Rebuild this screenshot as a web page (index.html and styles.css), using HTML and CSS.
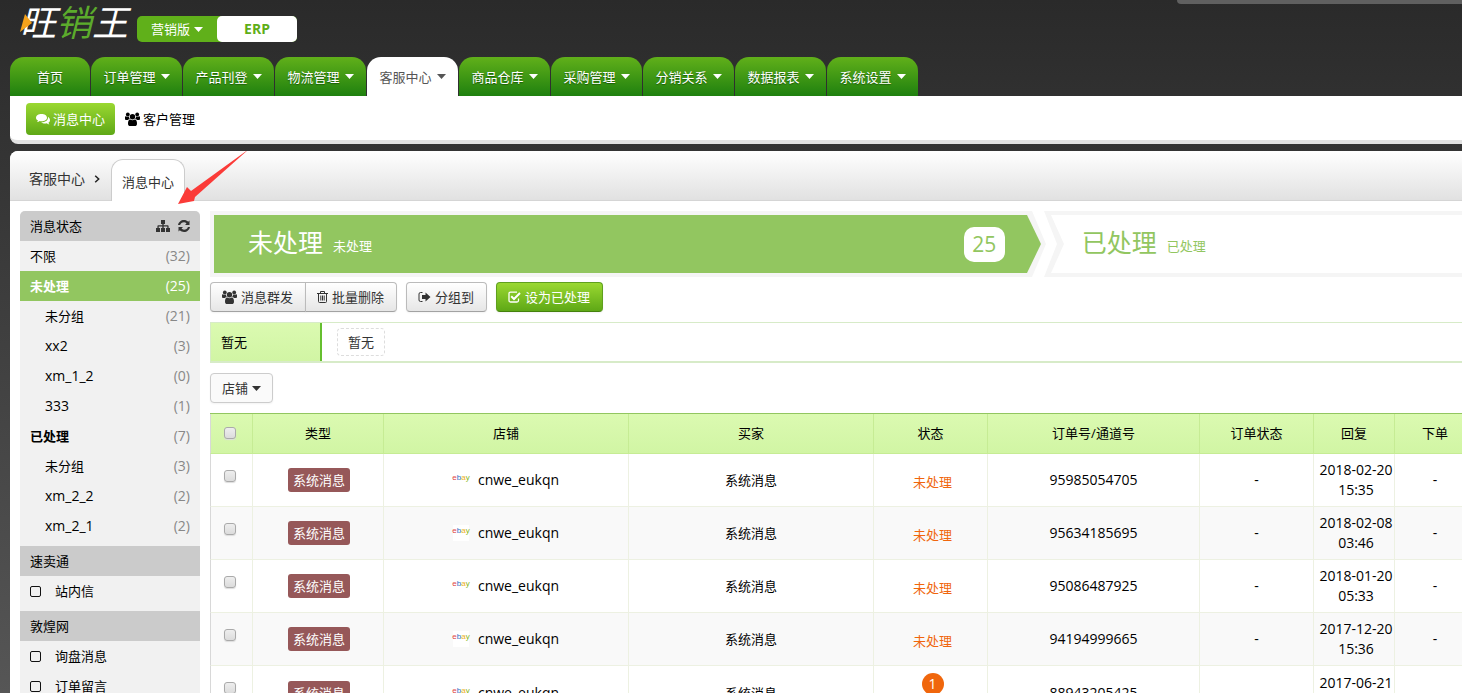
FILE: index.html
```html
<!DOCTYPE html>
<html lang="zh-CN">
<head>
<meta charset="utf-8">
<title>旺销王 - 消息中心</title>
<link rel="stylesheet" href="styles.css">
</head>
<body>
<svg class="sprite" aria-hidden="true">
  <symbol id="i-comments" viewBox="0 0 14 12">
    <path d="M5.500 1C2.500 1 0 2.500 0 4.700c0 1.300.8 2.200 2 2.900-.2.600-.6 1.100-1 1.500 1.100-.1 2-.4 2.700-1 .6.200 1.200.2 1.800.2 3 0 5.500-1.500 5.500-3.600S8.500 1 5.500 1z"/>
    <path d="M11.900 3.800c.1.300.1.600.1.900 0 2.700-3 4.600-6.500 4.600h-.4c1 .8 2.400 1.200 3.900 1.200.6 0 1.200-.1 1.700-.2.700.5 1.600 1 2.700 1.100-.5-.5-.8-1-1-1.600 1-.6 1.600-1.400 1.600-2.500 0-1.400-.8-2.700-2.100-3.500z"/>
  </symbol>
  <symbol id="i-users" viewBox="0 0 15 14">
    <circle cx="2.800" cy="2.500" r="1.900"/><circle cx="12.200" cy="2.500" r="1.900"/>
    <path d="M0 5.200C0 4.500.5 4 1 4.200c1 .7 2 .7 3 .3C3.900 5.700 4.300 6.500 5 7c-.9 0-1.600.3-2.100 1H1.500C.6 8 0 7.600 0 7zM15 5.200c0-.7-.5-1.200-1-1-1 .7-2 .7-3 .3.100 1.200-.3 2-1 2.500.9 0 1.600.3 2.100 1h1.400c.9 0 1.500-.4 1.500-1z"/>
    <circle cx="7.500" cy="4.700" r="2.700"/>
    <path d="M3 11.700c0-2.200.6-4.200 2.300-4.200 1.400 1 3 1 4.400 0 1.700 0 2.300 2 2.300 4.200 0 1.400-.9 2.300-2.200 2.300H5.200C3.900 14 3 13.100 3 11.700z"/>
  </symbol>
  <symbol id="i-sitemap" viewBox="0 0 14 12">
    <path d="M5 0h4v4H7.700v1.300h4c.6 0 .9.400.9.900V8H14v4h-4V8h1.300V6.500H7.700V8H9v4H5V8h1.300V6.500H2.700V8H4v4H0V8h1.400V6.200c0-.5.3-.9.9-.9h4V4H5z"/>
  </symbol>
  <symbol id="i-refresh" viewBox="0 0 12 12">
    <path d="M0 5C.5 2.100 3 0 6 0c1.600 0 3.100.6 4.200 1.700L11.500.5V5H7l1.500-1.600A4 4 0 0 0 6 2.200C4 2.200 2.600 3.300 2.100 5z"/>
    <path d="M12 7c-.5 2.900-3 5-6 5-1.600 0-3.100-.6-4.200-1.700L.5 11.500V7H5L3.500 8.600A4 4 0 0 0 6 9.800C8 9.800 9.400 8.700 9.900 7z"/>
  </symbol>
  <symbol id="i-trash" viewBox="0 0 11 12">
    <path fill="none" stroke="currentColor" d="M0 2.500h11M3.500 2V.5h4V2M1.500 3v7.500q0 1 1 1h6q1 0 1-1V3M3.800 4.500v5M5.500 4.500v5M7.200 4.500v5"/>
  </symbol>
  <symbol id="i-out" viewBox="0 0 13 12">
    <path fill="none" stroke="currentColor" d="M4.500 1.500H2.500Q1 1.500 1 3v6q0 1.500 1.500 1.500h2"/>
    <path d="M4 4h3.500V1.500L12.500 6 7.500 10.500V8H4z"/>
  </symbol>
  <symbol id="i-check" viewBox="0 0 13 12">
    <path fill="none" stroke="currentColor" stroke-width="1.300" d="M9 1.200H2.500q-1.500 0-1.500 1.500V9.500Q1 11 2.500 11H9q1.500 0 1.500-1.500V7.500"/>
    <path fill="none" stroke="currentColor" stroke-width="2" d="M3.200 5.200L6 8 12 2"/>
  </symbol>
  <symbol id="i-caret" viewBox="0 0 9 5"><path d="M0 0h9L4.500 5z"/></symbol>
</svg>

<header class="top">
  <h1 class="logo"><svg class="logo-mark" viewBox="0 0 12 18"><path d="M5 0l7 9-12 9z"/></svg>旺<span class="logo-green">销</span>王</h1>
  <div class="edition">
    <button class="edition-item" type="button">营销版<svg class="caret"><use href="#i-caret"/></svg></button>
    <button class="edition-item edition-on" type="button">ERP</button>
  </div>
  <div class="top-strip"></div>
</header>

<nav class="nav">
  <a class="tab tab-home" href="#">首页</a>
  <a class="tab" href="#">订单管理<svg class="caret"><use href="#i-caret"/></svg></a>
  <a class="tab" href="#">产品刊登<svg class="caret"><use href="#i-caret"/></svg></a>
  <a class="tab" href="#">物流管理<svg class="caret"><use href="#i-caret"/></svg></a>
  <a class="tab tab-on" href="#">客服中心<svg class="caret"><use href="#i-caret"/></svg></a>
  <a class="tab" href="#">商品仓库<svg class="caret"><use href="#i-caret"/></svg></a>
  <a class="tab" href="#">采购管理<svg class="caret"><use href="#i-caret"/></svg></a>
  <a class="tab" href="#">分销关系<svg class="caret"><use href="#i-caret"/></svg></a>
  <a class="tab" href="#">数据报表<svg class="caret"><use href="#i-caret"/></svg></a>
  <a class="tab" href="#">系统设置<svg class="caret"><use href="#i-caret"/></svg></a>
</nav>
<div class="subnav">
  <a class="sub sub-on" href="#"><svg class="ic-14"><use href="#i-comments"/></svg>消息中心</a>
  <a class="sub" href="#"><svg class="ic-15"><use href="#i-users"/></svg>客户管理</a>
</div>

<div class="panel">
  <div class="crumbs">
    <a class="crumb" href="#">客服中心</a>
    <svg class="chev" viewBox="0 0 6 8"><path d="M1.200.700L4.700 4 1.200 7.300"/></svg>
    <a class="crumb-tab" href="#">消息中心</a>
    <svg class="pointer" viewBox="0 0 72 56"><path d="M0 55L9 38l4 4L71 0 17 48l-1 4z"/></svg>
  </div>
  <div class="body">
    <aside class="side">
      <div class="side-head side-first">消息状态
        <span class="side-tools">
          <button class="tool" type="button" aria-label="分组"><svg class="ic-14"><use href="#i-sitemap"/></svg></button>
          <button class="tool" type="button" aria-label="刷新"><svg class="ic-12"><use href="#i-refresh"/></svg></button>
        </span>
      </div>
      <ul class="side-list">
        <li><a class="item" href="#">不限<span class="count">(32)</span></a></li>
        <li><a class="item item-on" href="#"><b>未处理</b><span class="count">(25)</span></a></li>
        <li><a class="item item-sub" href="#">未分组<span class="count">(21)</span></a></li>
        <li><a class="item item-sub" href="#"><span class="latin">xx2</span><span class="count">(3)</span></a></li>
        <li><a class="item item-sub" href="#"><span class="latin">xm_1_2</span><span class="count">(0)</span></a></li>
        <li><a class="item item-sub" href="#"><span class="latin">333</span><span class="count">(1)</span></a></li>
        <li><a class="item" href="#"><b>已处理</b><span class="count">(7)</span></a></li>
        <li><a class="item item-sub" href="#">未分组<span class="count">(3)</span></a></li>
        <li><a class="item item-sub" href="#"><span class="latin">xm_2_2</span><span class="count">(2)</span></a></li>
        <li><a class="item item-sub" href="#"><span class="latin">xm_2_1</span><span class="count">(2)</span></a></li>
      </ul>
      <div class="side-head">速卖通</div>
      <div class="side-list"><label class="pick"><input class="pick-box" type="checkbox">站内信</label></div>
      <div class="side-head">敦煌网</div>
      <div class="side-list">
        <label class="pick"><input class="pick-box" type="checkbox">询盘消息</label>
        <label class="pick"><input class="pick-box" type="checkbox">订单留言</label>
      </div>
    </aside>

    <main class="main">
      <div class="steps">
        <a class="step step-on" href="#">
          <span class="step-body"><span class="step-title">未处理</span><span class="step-note">未处理</span><span class="step-count">25</span></span>
          <svg class="step-end" viewBox="0 0 20 66"><path class="rim" d="M0 0h5l14 33L5 66H0z"/><path class="fill" d="M0 4l14 29L0 62z"/></svg>
        </a>
        <a class="step step-next" href="#">
          <svg class="step-end" viewBox="0 0 20 66"><path class="rim" d="M0 0h20v4H7l13 29L7 62h13v4H0l13-33z"/></svg>
          <span class="step-body"><span class="step-title">已处理</span><span class="step-note">已处理</span></span>
        </a>
      </div>

      <div class="actions">
        <div class="group">
          <button class="btn" type="button"><svg class="ic-15"><use href="#i-users"/></svg>消息群发</button>
          <button class="btn" type="button"><svg class="ic-11"><use href="#i-trash"/></svg>批量删除</button>
        </div>
        <button class="btn" type="button"><svg class="ic-13"><use href="#i-out"/></svg>分组到</button>
        <button class="btn btn-green" type="button"><svg class="ic-13"><use href="#i-check"/></svg>设为已处理</button>
      </div>

      <div class="filter">
        <div class="filter-name">暂无</div>
        <div class="filter-values"><span class="chip">暂无</span></div>
      </div>

      <button class="btn btn-flat" type="button">店铺<svg class="caret"><use href="#i-caret"/></svg></button>

      <div class="grid-wrap">
        <table class="grid">
          <colgroup><col class="w-check"><col class="w-type"><col><col><col class="w-state"><col class="w-order"><col class="w-state"><col class="w-date"><col class="w-date"></colgroup>
          <thead>
            <tr><th class="h-check"><input class="box" type="checkbox" aria-label="全选"></th><th>类型</th><th>店铺</th><th>买家</th><th>状态</th><th>订单号/通道号</th><th>订单状态</th><th>回复</th><th>下单</th></tr>
          </thead>
          <tbody>
            <tr><td class="c-check"><input class="box" type="checkbox" aria-label="选择 95985054705"></td><td><span class="tag">系统消息</span></td><td><span class="shop"><span class="ebay"><i class="e1">e</i><i class="e2">b</i><i class="e3">a</i><i class="e4">y</i></span>cnwe_eukqn</span></td><td>系统消息</td><td class="c-state">未处理</td><td class="latin">95985054705</td><td class="latin">-</td><td class="c-date">2018-02-20<br>15:35</td><td class="latin">-</td></tr>
            <tr><td class="c-check"><input class="box" type="checkbox" aria-label="选择 95634185695"></td><td><span class="tag">系统消息</span></td><td><span class="shop"><span class="ebay"><i class="e1">e</i><i class="e2">b</i><i class="e3">a</i><i class="e4">y</i></span>cnwe_eukqn</span></td><td>系统消息</td><td class="c-state">未处理</td><td class="latin">95634185695</td><td class="latin">-</td><td class="c-date">2018-02-08<br>03:46</td><td class="latin">-</td></tr>
            <tr><td class="c-check"><input class="box" type="checkbox" aria-label="选择 95086487925"></td><td><span class="tag">系统消息</span></td><td><span class="shop"><span class="ebay"><i class="e1">e</i><i class="e2">b</i><i class="e3">a</i><i class="e4">y</i></span>cnwe_eukqn</span></td><td>系统消息</td><td class="c-state">未处理</td><td class="latin">95086487925</td><td class="latin">-</td><td class="c-date">2018-01-20<br>05:33</td><td class="latin">-</td></tr>
            <tr><td class="c-check"><input class="box" type="checkbox" aria-label="选择 94194999665"></td><td><span class="tag">系统消息</span></td><td><span class="shop"><span class="ebay"><i class="e1">e</i><i class="e2">b</i><i class="e3">a</i><i class="e4">y</i></span>cnwe_eukqn</span></td><td>系统消息</td><td class="c-state">未处理</td><td class="latin">94194999665</td><td class="latin">-</td><td class="c-date">2017-12-20<br>15:36</td><td class="latin">-</td></tr>
            <tr><td class="c-check"><input class="box" type="checkbox" aria-label="选择 88943205425"></td><td><span class="tag">系统消息</span></td><td><span class="shop"><span class="ebay"><i class="e1">e</i><i class="e2">b</i><i class="e3">a</i><i class="e4">y</i></span>cnwe_eukqn</span></td><td>系统消息</td><td class="c-state"><span class="num">1</span>未处理</td><td class="latin">88943205425</td><td class="latin">-</td><td class="c-date">2017-06-21<br>10:20</td><td class="latin">-</td></tr>
          </tbody>
        </table>
      </div>
    </main>
  </div>
</div>
</body>
</html>
```
FILE: styles.css
```css
* { box-sizing: border-box; }
body {
  margin: 0;
  height: 100vh;
  overflow: hidden;
  display: flex;
  flex-direction: column;
  background: linear-gradient(#2a2a2a, #333 20%, #565656);
  font: 13px/20px "Open Sans", "Noto Sans CJK SC", sans-serif;
  color: #000;
}
a { color: inherit; text-decoration: none; }
button { font: inherit; color: inherit; margin: 0; cursor: pointer; }
svg { display: block; flex: none; fill: currentColor; }
.sprite { position: absolute; width: 0; height: 0; }
.caret { width: 9px; height: 5px; }
.ic-11 { width: 11px; height: 12px; }
.ic-12 { width: 12px; height: 12px; }
.ic-13 { width: 13px; height: 12px; }
.ic-14 { width: 14px; height: 12px; }
.ic-15 { width: 15px; height: 14px; }
.latin { font-size: 14px; }

/* header */
.top { display: flex; flex: none; height: 57px; padding-left: 20px; gap: 8px; position: relative; }
.logo {
  position: relative;
  margin: 0;
  width: 109px;
  font: italic 400 36px/40px "Noto Sans CJK SC", sans-serif;
  color: #fff;
  white-space: nowrap;
}
.logo-green { color: #5cab2c; }
.logo-mark { position: absolute; left: 0; top: 14px; width: 12px; height: 18px; fill: #f5a21b; }
.edition { display: flex; height: 26px; margin-top: 16px; border-radius: 5px; background: #60b01a; }
.edition-item {
  display: flex;
  align-items: center;
  justify-content: center;
  gap: 4px;
  width: 80px;
  padding: 0;
  border: 0;
  border-radius: 5px;
  background: none;
  color: #fff;
}
.edition-on { background: #fff; color: #5fae18; font-size: 14px; font-weight: 700; }
.top-strip {
  position: absolute;
  top: 0;
  right: 0;
  width: 285px;
  height: 4px;
  background: #606060;
  border-radius: 0 0 0 4px;
}

/* main navigation */
.nav { display: flex; flex: none; gap: 1px; padding-left: 10px; }
.tab {
  display: flex;
  align-items: center;
  justify-content: center;
  gap: 5px;
  width: 91px;
  height: 39px;
  border-radius: 14px 14px 0 0;
  background: linear-gradient(#61b01a, #1f800f);
  color: #fff;
  text-shadow: 0 1px 1px #1c5c08;
}
.tab-home { width: 80px; }
.tab-on { background: #fff; color: #555; text-shadow: none; }
.subnav {
  display: flex;
  flex: none;
  align-items: center;
  margin-left: 10px;
  height: 48px;
  padding: 2px 16px 0;
  background: #fff;
  border-bottom: 4px solid #e2e2e2;
  border-radius: 0 0 0 8px;
}
.sub { display: flex; align-items: center; gap: 3px; height: 32px; padding: 0 10px; border-radius: 4px; }
.sub-on { background: linear-gradient(#9ad831, #5ea816); color: #fff; }

/* content panel */
.panel { flex: 1; min-height: 0; margin: 7px 0 0 10px; background: #fff; border-radius: 8px 0 0 0; overflow: hidden; }
.crumbs {
  position: relative;
  display: flex;
  align-items: flex-end;
  height: 50px;
  padding-left: 19px;
  background: linear-gradient(#fff, #e1e1e1);
  border-bottom: 1px solid #d5d5d5;
}
.crumb { font-size: 14px; line-height: 42px; color: #333; }
.chev { width: 6px; height: 8px; margin: 0 11px 17px 9px; fill: none; stroke: #222; stroke-width: 1.5; }
.crumb-tab {
  width: 74px;
  height: 42px;
  margin-bottom: -1px;
  border: 1px solid #ccc;
  border-bottom: 0;
  border-radius: 12px 12px 0 0;
  background: #fff;
  color: #333;
  text-align: center;
  line-height: 44px;
}
.pointer { position: absolute; left: 168px; top: -2px; width: 72px; height: 56px; fill: #fb3b38; }
.body { display: flex; gap: 10px; padding: 10px 0 0 10px; }

/* sidebar */
.side { flex: none; width: 180px; background: #f1f1f1; border-radius: 5px 5px 0 0; }
.side-head { display: flex; align-items: center; height: 30px; padding: 0 10px; background: #cbcbcb; }
.side-first { border-radius: 5px 5px 0 0; }
.side-tools { display: flex; gap: 8px; margin-left: auto; color: #333; }
.tool { padding: 0; border: 0; background: none; }
.side-list { margin: 0; padding: 0 0 5px; list-style: none; }
.item { display: flex; align-items: center; height: 30px; padding: 0 10px; }
.item-sub { padding-left: 25px; }
.item-on { background: #92c660; color: #fff; }
.count { margin-left: auto; font-size: 14px; color: #888; }
.item-on .count { color: #fff; }
.pick { display: flex; align-items: center; gap: 14px; height: 30px; padding: 0 10px; }
.pick-box { appearance: none; width: 11px; height: 11px; margin: 0; border: 1px solid #111; border-radius: 2px; }

/* steps */
.main { flex: 1; min-width: 0; }
.steps { display: flex; height: 66px; }
.step { display: flex; min-width: 0; }
.step-on { flex: 2; color: #fff; }
.step-next { flex: 1; color: #92c660; margin-left: -3px; }
.step-body { display: flex; flex: 1; align-items: flex-start; border: 4px solid #f5f5f5; border-width: 4px 0; }
.step-on .step-body { padding: 0 22px 0 34px; background: #92c660; border-left-width: 4px; }
.step-next .step-body { padding-left: 18px; }
.step-end { width: 20px; height: 66px; }
.rim { fill: #f5f5f5; }
.fill { fill: #92c660; }
.step-title { font-size: 25px; line-height: 54px; }
.step-note { margin-left: 10px; line-height: 62px; }
.step-count {
  margin: 12px 0 0 auto;
  width: 41px;
  border-radius: 10px;
  background: #fff;
  color: #92c660;
  font-size: 21px;
  line-height: 35px;
  text-align: center;
}

/* buttons */
.actions { display: flex; gap: 9px; margin-top: 5px; }
.group { display: flex; }
.btn {
  display: flex;
  align-items: center;
  gap: 4px;
  height: 30px;
  padding: 0 11px;
  border: 1px solid #bbb;
  border-bottom-color: #a2a2a2;
  border-radius: 4px;
  background: linear-gradient(#fff, #e6e6e6);
  color: #333;
  box-shadow: 0 1px 2px rgba(0, 0, 0, 0.05);
}
.actions .btn { padding: 0 12px 0 11px; }
.group .btn:first-child { border-radius: 4px 0 0 4px; }
.group .btn + .btn { margin-left: -1px; border-radius: 0 4px 4px 0; }
.actions .btn-green {
  border-color: #5fa01e;
  border-bottom-color: #44810c;
  background: linear-gradient(#9ad831, #5ea816);
  color: #fff;
}
.btn-flat { border-color: #ccc; background: #fafafa; }

/* filter row */
.filter {
  display: flex;
  height: 41px;
  margin: 10px 0;
  border: 1px solid #d7ebc8;
  border-width: 1px 0 2px 1px;
}
.filter-name {
  width: 111px;
  padding-left: 10px;
  line-height: 38px;
  background: linear-gradient(#dbfab1, #d1f5a4);
  border-right: 2px solid #65bf2f;
}
.filter-values { padding: 5px 15px; }
.chip {
  display: block;
  padding: 0 10px;
  border: 1px dashed #ddd;
  border-radius: 4px;
  line-height: 26px;
  color: #333;
}

/* message table */
.grid-wrap { margin-top: 10px; overflow: hidden; }
.grid {
  width: calc(100% + 13px);
  table-layout: fixed;
  border-spacing: 0;
  border-top: 1px solid #92c660;
}
.w-check { width: 42px; }
.w-type { width: 131px; }
.w-state { width: 114px; }
.w-order { width: 212px; }
.w-date { width: 81px; }
.grid th {
  height: 40px;
  padding: 0 0 2px;
  font-weight: 400;
  background: linear-gradient(#dbfab1, #d1f5a4);
  border: 0 solid #c6ec94;
  border-width: 0 0 1px 1px;
}
.grid td {
  height: 53px;
  padding: 6px 0;
  text-align: center;
  border: 0 solid #edf1e2;
  border-width: 0 0 1px 1px;
}
.grid th:first-child, .grid td:first-child { border-left-color: #d8d8d8; }
.grid tr:nth-child(even) td { background: #f9f9f9; }
.grid .h-check { padding-right: 4px; }
.grid td.c-check { vertical-align: top; padding: 16px 4px 0 0; }
.box {
  appearance: none;
  display: block;
  width: 12px;
  height: 12px;
  margin: 0 auto;
  border: 1px solid #aaa;
  border-radius: 3px;
  background: linear-gradient(#eee, #dcdcdc);
  box-shadow: 0 1px 1px #ddd;
}
.tag { display: inline-block; margin-left: 2px; padding: 0 5px; border-radius: 3px; background: #965859; color: #fff; line-height: 24px; }
.shop { display: flex; align-items: center; justify-content: center; gap: 9px; font-size: 14px; }
.ebay {
  display: flex;
  justify-content: center;
  width: 16px;
  height: 16px;
  background: #fff;
  font: 400 8px/12px "Liberation Sans", sans-serif;
}
.ebay i { font-style: normal; }
.e1 { color: #e0453f; }
.e2 { color: #2f6fc4; }
.e3 { color: #edb01c; }
.e4 { color: #86b817; }
.grid td.c-state { padding: 7px 0 3px 4px; color: #f0660c; }
.grid td.c-date { padding: 6px 0 6px 4px; font-size: 14px; white-space: nowrap; }
.num {
  display: block;
  width: 22px;
  margin: 0 auto 2px;
  border-radius: 11px;
  background: #f0660c;
  color: #fff;
  font-size: 14px;
  line-height: 22px;
}
```
